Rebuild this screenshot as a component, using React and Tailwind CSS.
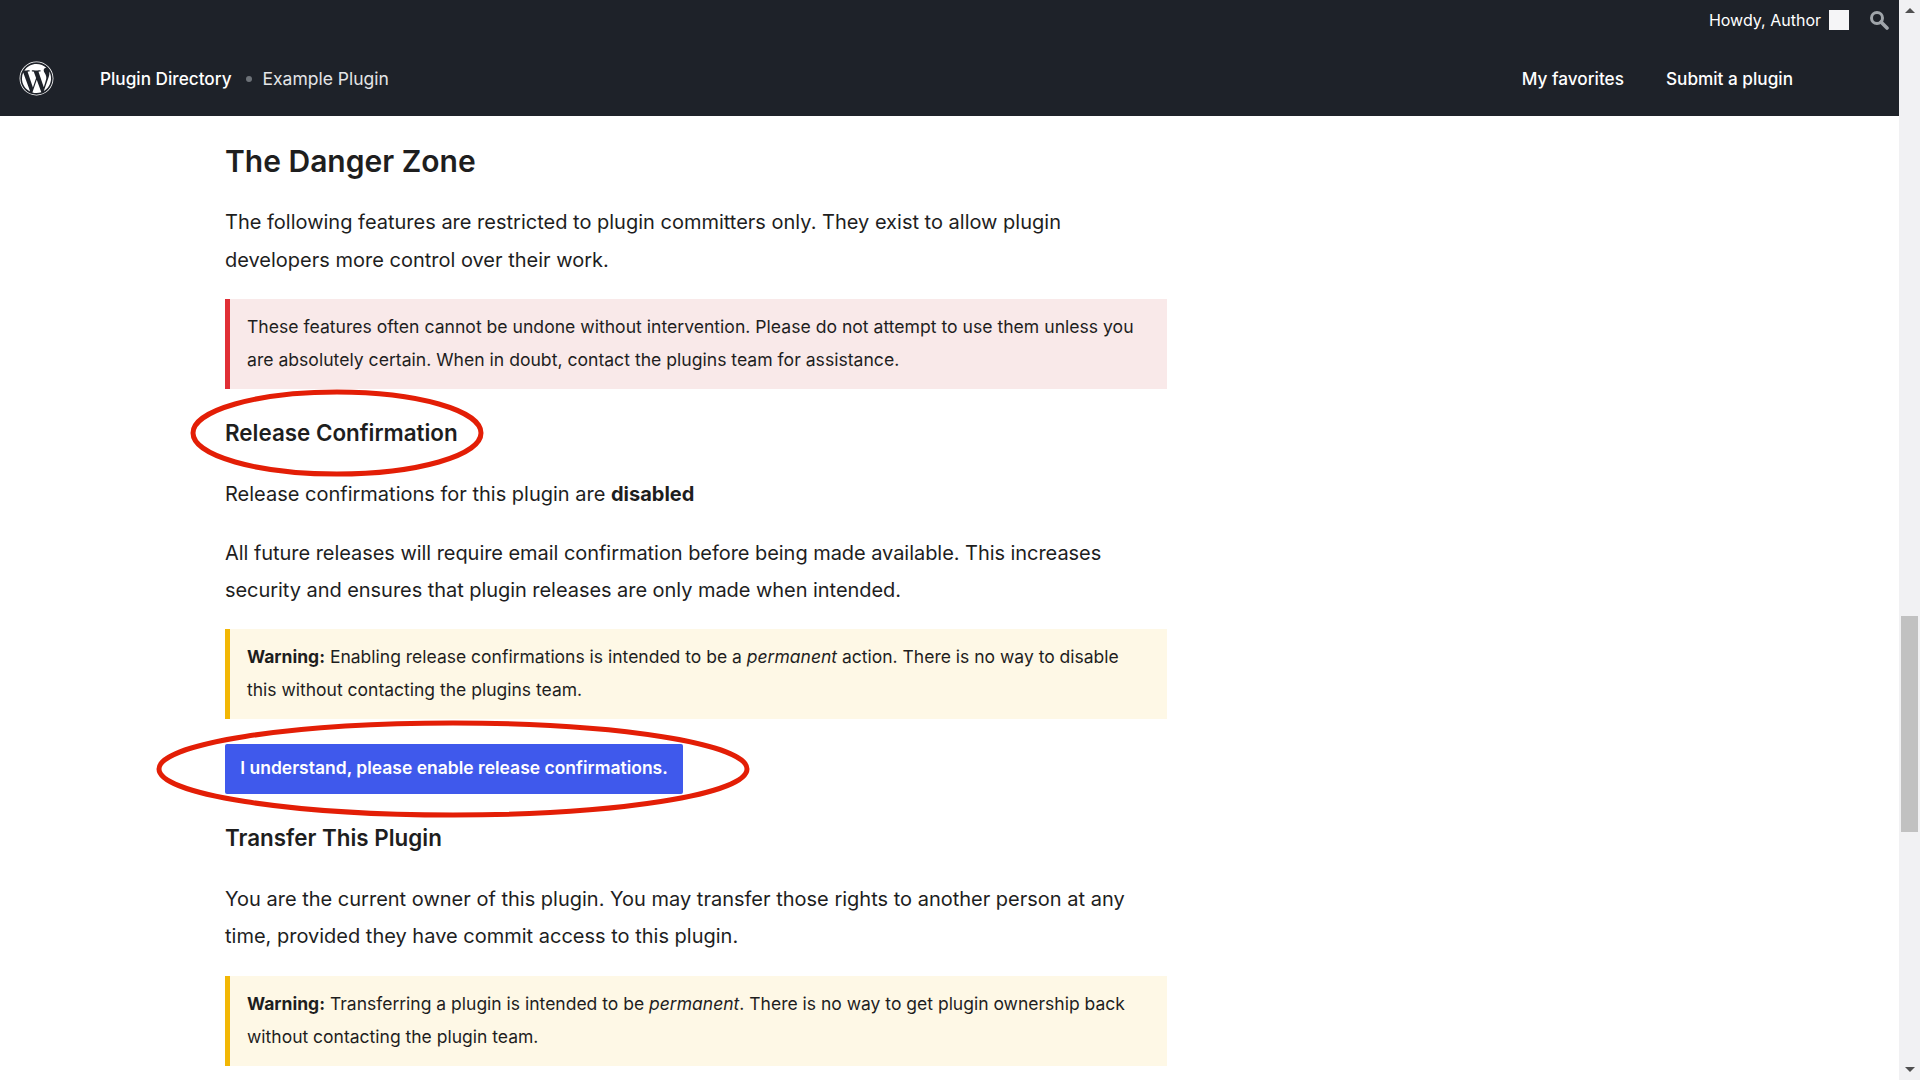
import React from "react";
import { FaWordpress } from "react-icons/fa";

const Notice = ({ kind, children }) => (
  <div
    className={
      kind === "error"
        ? "h-[90px] border-l-[5px] border-[#e02f36] bg-[#f9e9e9] pl-[17px] pr-4 pt-[11px] text-[17.6px] leading-[33px] text-[#1e1e1e]"
        : "h-[90px] border-l-[5px] border-[#f2b705] bg-[#fef8e6] pl-[17px] pr-4 pt-[11px] text-[17.5px] leading-[33px] text-[#1e1e1e]"
    }
  >
    {children}
  </div>
);

const Para = ({ className, children }) => (
  <p className={`text-[20px] leading-[37.5px] text-[#1e1e1e] ${className}`}>{children}</p>
);

const Ring = ({ className, rx, ry }) => (
  <svg className={`absolute pointer-events-none ${className}`} width={rx * 2 + 10} height={ry * 2 + 10}>
    <ellipse cx={rx + 5} cy={ry + 5} rx={rx} ry={ry} fill="none" stroke="#e31e06" strokeWidth="5" />
  </svg>
);

export default function App() {
  return (
    <div className="flex h-screen overflow-hidden bg-white font-['Inter',sans-serif]">
      <div className="min-w-0 flex-1">
        <header className="h-[116px] bg-[#1e2229] text-white">
          {/* admin bar */}
          <div className="flex h-10 items-center justify-end pr-[10px]">
            <span className="text-[16px]">Howdy, Author</span>
            <span className="ml-2 h-5 w-5 bg-[#f5f5f7]" />
            <svg className="ml-5 h-5 w-5" viewBox="0 0 20 20" fill="none" stroke="#a0a5aa">
              <circle cx="8" cy="8" r="5.5" strokeWidth="3" />
              <path d="M12 12l6 6" strokeWidth="3.6" strokeLinecap="round" />
            </svg>
          </div>
          {/* main nav */}
          <div className="flex h-[76px] items-center pl-[19px] pr-[106px] pt-[1px]">
            <FaWordpress className="text-[35px]" />
            <span className="ml-[46px] text-[17.2px] font-medium">Plugin Directory</span>
            <span className="ml-[14px] h-[6px] w-[6px] rounded-full bg-[#6d7278]" />
            <span className="ml-[11px] mt-[1px] text-[17.5px] text-[#e4e5e7]">Example Plugin</span>
            <nav className="ml-auto mt-[1px] flex gap-[42px] text-[17.2px] font-medium">
              <span>My favorites</span>
              <span>Submit a plugin</span>
            </nav>
          </div>
        </header>

        <main className="ml-[225px] w-[942px]">
          <h2 className="mt-[25px] text-[30px] font-semibold leading-[40px] text-[#1e1e1e]">The Danger Zone</h2>
          <Para className="mt-[23px]">
            The following features are restricted to plugin committers only. They exist to allow plugin developers more
            control over their work.
          </Para>
          <div className="mt-[20px]">
            <Notice kind="error">
              These features often cannot be undone without intervention. Please do not attempt to use them unless you
              are absolutely certain. When in doubt, contact the plugins team for assistance.
            </Notice>
          </div>

          <h3 className="relative mt-[27px] text-[22.4px] font-semibold leading-[34px] text-[#1e1e1e]">
            Release Confirmation
            <Ring className="left-[-37px] top-[-29px]" rx={144} ry={41} />
          </h3>
          <Para className="mt-[26px]">
            Release confirmations for this plugin are <strong className="font-bold">disabled</strong>
          </Para>
          <Para className="mt-[21px] tracking-[-0.05px]">
            All future releases will require email confirmation before being made available. This increases security and
            ensures that plugin releases are only made when intended.
          </Para>
          <div className="mt-[19px]">
            <Notice kind="warning">
              <strong className="font-bold">Warning:</strong> Enabling release confirmations is intended to be a{" "}
              <em>permanent</em> action. There is no way to disable this without contacting the plugins team.
            </Notice>
          </div>

          <div className="relative mt-[25px] w-[458px]">
            <button className="h-[50px] w-[458px] rounded-[2px] bg-[#3f59ec] text-[17.5px] font-semibold text-white">
              I understand, please enable release confirmations.
            </button>
            <Ring className="left-[-71px] top-[-26px]" rx={294} ry={46} />
          </div>

          <h3 className="mt-[27px] text-[22.4px] font-semibold leading-[34px] text-[#1e1e1e]">Transfer This Plugin</h3>
          <Para className="mt-[26px]">
            You are the current owner of this plugin. You may transfer those rights to another person at any time,
            provided they have commit access to this plugin.
          </Para>
          <div className="mt-[20px]">
            <Notice kind="warning">
              <strong className="font-bold">Warning:</strong> Transferring a plugin is intended to be{" "}
              <em>permanent</em>. There is no way to get plugin ownership back without contacting the plugin team.
            </Notice>
          </div>
        </main>
      </div>

      {/* scrollbar */}
      <div className="flex h-full w-[21px] shrink-0 flex-col items-center bg-[#f1f1f3]">
        <div className="mt-2 h-0 w-0 border-x-[5px] border-b-[5px] border-x-transparent border-b-[#505050]" />
        <div className="mt-[603px] h-[216px] w-[17px] bg-[#c1c1c1]" />
        <div className="mt-auto mb-2 h-0 w-0 border-x-[5px] border-t-[5px] border-x-transparent border-t-[#505050]" />
      </div>
    </div>
  );
}
